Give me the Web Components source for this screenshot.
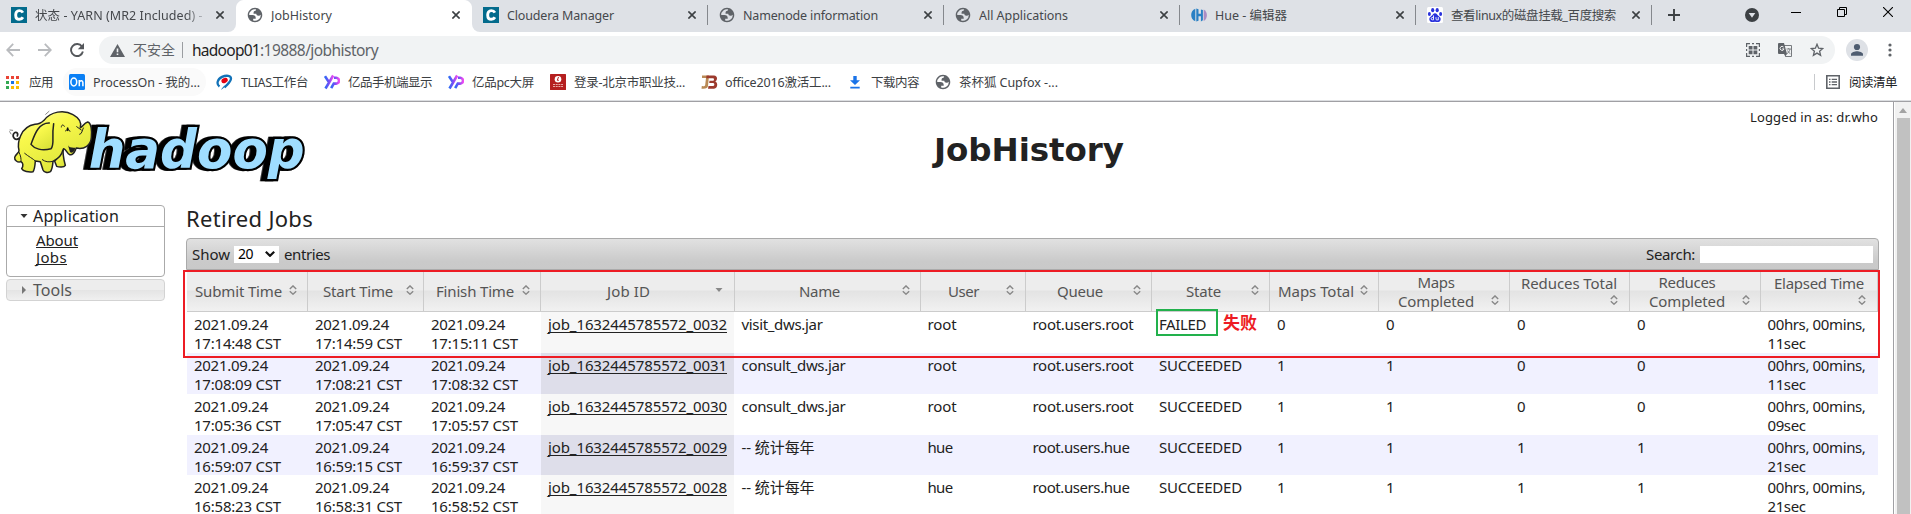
<!DOCTYPE html>
<html lang="zh-CN">
<head>
<meta charset="utf-8">
<title>JobHistory</title>
<style>
html,body{margin:0;height:100%;overflow:hidden;background:#fff}
body{font-family:"Noto Sans","Noto Sans CJK SC",sans-serif;color:#222}
</style>
</head>
<body>
<browser-window></browser-window>
<script>
const define = (name, html, setup) => {
  const tpl = document.createElement('template');
  tpl.innerHTML = html;
  customElements.define(name, class extends HTMLElement {
    connectedCallback() {
      if (this.shadowRoot) return;
      this.attachShadow({ mode: 'open' }).append(tpl.content.cloneNode(true));
      if (setup) setup.call(this, this.shadowRoot);
    }
  });
};

/* A label tracked to fill a given width in pixels. */
define('fit-text', `<style>:host{display:inline-block;white-space:pre;flex:none}</style><span><slot></slot></span>`, function (root) {
  const w = +this.getAttribute('w');
  const span = root.querySelector('span');
  const natural = span.getBoundingClientRect().width;
  this.style.width = w + 'px';
  span.style.letterSpacing = ((w - natural) / [...this.textContent].length).toFixed(3) + 'px';
});

const globe = '<svg viewBox="1 1 22 22" width="16" height="16"><path fill="#5f6368" fill-rule="evenodd" d="M12 2C6.48 2 2 6.48 2 12s4.48 10 10 10 10-4.48 10-10S17.52 2 12 2zM4 12h4.4c3.407.022 4.922 1.73 4.543 5.127H9.488v2.47a8.004 8.004 0 0 0 10.498-8.083C19.327 12.504 18.332 13 17 13c-2.137 0-3.206-.916-3.206-2.75h-3.748c-.274-2.728.683-4.092 2.87-4.092 0-.975.327-1.597.811-1.97A8.004 8.004 0 0 0 4 12z"/></svg>';
const yp = '<svg viewBox="0 0 16 16" width="16" height="16"><defs><linearGradient id="g"><stop stop-color="#2c6bf5"/><stop offset=".5" stop-color="#7a4cf5"/><stop offset="1" stop-color="#f04bf0"/></linearGradient></defs><g fill="none" stroke="url(#g)" stroke-width="2.6"><path d="M1 2.2 4.5 7.5M9.2 1.5 5.4 8 1.5 14.5"/><path d="M7.2 14.2 9.8 9.6H12a2.9 2.9 0 0 0 .3-5.8H10"/></g></svg>';
const icons = {
  globe, yp,
  cloudera: '<svg viewBox="0 0 16 16" width="16" height="16"><path fill="#036b8c" d="M0 0h16v16H0z"/><path fill="none" stroke="#fff" stroke-width="2.9" d="M11.9 5.6C11.1 4.2 9.900 3.600 8.300 3.600 5.900 3.600 4.700 5.400 4.700 7.900s1.200 4.400 3.600 4.400c1.600 0 2.800-.7 3.600-2.100"/></svg>',
  hue: '<svg viewBox="0 0 16 16" width="16" height="16"><path fill="#2a80c4" d="M4.300 1.800v12.400C1.500 13.300.2 10.700.2 8S1.500 2.700 4.300 1.800zM5.300 1.600l2.200.6v4.600h2.400V2.400l2 .6v10.300l-2 1.200V9.200H7.500v4.600l-2.200.7z"/><path fill="#ab8cc4" d="M12.700 2.500C14.900 3.500 15.900 6 15.900 8s-.9 5-3.200 6z"/></svg>',
  baidu: '<svg viewBox="0 0 16 16" width="16" height="16"><rect width="16" height="16" rx="1.500" fill="#fff"/><g fill="#2a32dc"><ellipse cx="2.400" cy="7" rx="1.500" ry="2"/><ellipse cx="5.700" cy="3.200" rx="1.600" ry="2.100"/><ellipse cx="10.200" cy="3.200" rx="1.600" ry="2.100"/><ellipse cx="13.600" cy="7" rx="1.500" ry="2"/><path d="M8 6.200c1.800 0 2.300 1.700 3.600 2.900 1.700 1.300 2.500 2.300 1.900 4.100-.7 2.100-2.900 2-5.500 1.500-2.600.5-4.800.6-5.500-1.500-.6-1.800.2-2.800 1.900-4.100C5.700 7.900 6.200 6.200 8 6.200z"/></g><path d="M6.500 8.500v4.300H5.300c-1.500 0-1.500-2.300 0-2.300h1.200M9 10.200v1.700c0 1 .4 1 2.300 1v-2.800" fill="none" stroke="#fff" stroke-width=".9"/></svg>',
  apps: '<svg viewBox="0 0 13 13" width="13" height="13"><path fill="#ea4335" d="M0 0h3v3H0zm5 0h3v3H5zm5 0h3v3h-3z"/><path fill="#34a853" d="M0 5h3v3H0zM0 10h3v3H0z"/><path fill="#1a73e8" d="M5 5h3v3H5z"/><path fill="#fbbc04" d="M10 5h3v3h-3zM5 10h3v3H5zm5 0h3v3h-3z"/></svg>',
  on: '<svg viewBox="0 0 16 16" width="16" height="16"><rect width="16" height="16" rx="1.500" fill="#0b80f5"/><g fill="none" stroke="#fff" stroke-width="1.500"><ellipse cx="4.800" cy="8" rx="2.900" ry="3.900"/><path d="M10.300 12.200V6M10.300 8c.9-1.700 3.600-1.800 3.600.6v3.600"/></g></svg>',
  tlias: '<svg viewBox="0 0 17 16" width="17" height="16"><path fill="none" stroke="#1272b8" stroke-width="2.300" d="M3.500 12.500C0 10 1.500 5 6 2.900c4.500-2 9-1.400 9 1.700 0 3.400-3.500 5.300-6.500 8.900"/><path fill="#1272b8" d="M5 16c1-2.600 3-4.500 6-5.500L7.500 14z"/><ellipse cx="8.600" cy="6.500" rx="3.300" ry="2.400" fill="#e60012" transform="rotate(-25 8.600 6.500)"/></svg>',
  red: '<svg viewBox="0 0 16 16" width="16" height="16"><rect width="16" height="16" rx=".5" fill="#b51f1f"/><circle cx="8" cy="5.200" r="3.300" fill="#fff"/><path d="M8.500 3 7.300 6.300h1.500" stroke="#b51f1f" fill="none"/><path d="M3 10.500h10M3 12.500h10" stroke="#e8a9a4" stroke-width="1.200" stroke-dasharray="2 .7"/></svg>',
  b: '<svg viewBox="0 0 17 16" width="17" height="16"><path fill="#b98a55" d="M1 1.500h7L7 12c-.4 2.300-2 3-6.500 2.700l.3-2.600c2.500.1 3.200 0 3.400-1.200L5 4H1z"/><path fill="#9c3a2d" d="M5.500 1.500H13c3.500 0 4 4.500 1.200 6C17.500 8.800 16.500 14.700 13 14.700H7l.5-2.600h4.700c1.500 0 1.500-3 0-3H8.200l.3-2.400H12c1.300 0 1.300-2.500 0-2.500H5.200z"/></svg>',
  download: '<svg viewBox="0 0 10 13" width="10" height="13"><path fill="#1a73e8" d="M3.300 0h3.400v4.200H10L5 9 0 4.200h3.300zM.3 10.800h9.400v1.700H.3z"/></svg>',
  reading: '<svg viewBox="0 0 14 14" width="14" height="14"><path fill="none" stroke="#5f6368" stroke-width="1.600" d="M.8.8h12.400v12.400H.8z"/><path stroke="#5f6368" stroke-width="1.300" d="M3 4.300h1.500M3 7h1.500M3 9.700h1.500M5.700 4.300H11M5.700 7H11M5.700 9.700H11"/></svg>',
  back: '<svg viewBox="0 0 14 14" width="14" height="14"><path fill="none" stroke="#b9bbbe" stroke-width="1.800" d="M14 7H1.500M7.200.9 1.200 7l6 6.100"/></svg>',
  forward: '<svg viewBox="0 0 14 14" width="14" height="14"><path fill="none" stroke="#b9bbbe" stroke-width="1.800" d="M0 7h12.500M6.800.9l6 6.100-6 6.100"/></svg>',
  reload: '<svg viewBox="0 0 14 14" width="14" height="14"><path fill="none" stroke="#54575b" stroke-width="1.900" d="M12 3.600A6 6 0 1 0 12.900 8.500"/><path fill="#54575b" d="M14 0v6.300H7.800z"/></svg>',
  warning: '<svg viewBox="0 0 15 13" width="15" height="13"><path fill="#5f6368" fill-rule="evenodd" d="M7.500 0 15 13H0zM6.700 4.500v3.700h1.600V4.500zm0 5v1.600h1.600V9.500z"/></svg>',
  qr: '<svg viewBox="0 0 14 14" width="14" height="14"><path fill="none" stroke="#5f6368" stroke-width="1.200" d="M.6 4V.6H4M10 .6h3.400V4M13.400 10v3.400H10M4 13.400H.6V10M6 .6h2M6 13.400h2M.6 6v2M13.400 6v2"/><path fill="#5f6368" d="M2.700 2.900h3.800v3.700H2.700zm4.800 0h3.800v3.700H7.500zM2.700 7.600h3.800v3.700H2.700zm4.800 0h3.800v3.700H7.500z"/></svg>',
  translate: '<svg viewBox="0 0 14 14" width="14" height="14"><path fill="none" stroke="#777a7e" d="M6 2.500h7.500v11H7.200"/><path fill="#5f6368" d="M1 0h5l3 11H1a1 1 0 0 1-1-1V1a1 1 0 0 1 1-1zM6 11h3l-1.700 2.600z"/><path fill="none" stroke="#fff" stroke-width=".9" d="M5.600 4.100a2 2 0 1 0 .4 1.800H4.200"/><path fill="none" stroke="#777a7e" stroke-width=".9" d="M8.500 6H13M10.700 5v1M12 6c-.5 2.500-1.500 3.600-3 4.700M9.600 7.500c.5 1.500 1.500 2.500 2.800 3.200"/></svg>',
  star: '<svg viewBox="0 0 14 14" width="14" height="14"><path fill="none" stroke="#5f6368" stroke-width="1.300" d="m7 1.300 1.600 3.900 4.200.3-3.200 2.700 1 4.100L7 10.100l-3.600 2.200 1-4.100L1.200 5.500l4.200-.3z"/></svg>',
  avatar: '<svg viewBox="0 0 22 22" width="22" height="22"><circle cx="11" cy="11" r="11" fill="#dee1e6"/><circle cx="11" cy="8" r="3.100" fill="#4e5c70"/><path fill="#4e5c70" d="M5 16.800v-1.600c0-2 4-3 6-3s6 1 6 3v1.600z"/></svg>',
  dots: '<svg viewBox="0 0 4 14" width="4" height="14"><g fill="#5f6368"><circle cx="2" cy="2" r="1.600"/><circle cx="2" cy="7" r="1.600"/><circle cx="2" cy="12" r="1.600"/></g></svg>',
  x: '<svg viewBox="0 0 8 8" width="8" height="8"><path stroke="#3c4043" stroke-width="1.600" d="m.4.4 7.200 7.200m0-7.200L.4 7.600"/></svg>',
  plus: '<svg viewBox="0 0 12 12" width="12" height="12"><path stroke="#3c4043" stroke-width="1.900" d="M6 0v12M0 6h12"/></svg>',
  down: '<svg viewBox="0 0 14 14" width="14" height="14"><circle cx="7" cy="7" r="7" fill="#3c4043"/><path fill="#dee1e6" d="M3.700 5h6.600L7 9.800z"/></svg>',
  min: '<svg viewBox="0 0 10 10" width="10" height="10"><path stroke="#000" d="M0 5.500h10"/></svg>',
  restore: '<svg viewBox="0 0 10 10" width="10" height="10"><path fill="none" stroke="#000" d="M.5 2.500h7v7h-7zM2.500 2.500v-2h7v7h-2"/></svg>',
  close: '<svg viewBox="0 0 10 10" width="10" height="10"><path stroke="#000" stroke-width="1.100" d="m0 0 10 10M10 0 0 10"/></svg>',
  sort: '<svg viewBox="0 0 8 10" width="8" height="10"><path fill="none" stroke="#888" stroke-width="1.400" d="M.8 4 4 .9 7.200 4M.8 6.200 4 9.200l3.200-3"/></svg>',
  sorted: '<svg viewBox="0 0 8 10" width="8" height="10"><path fill="#888" d="M.5 3h7L4 7z"/></svg>'
};
define('ui-icon', '<style>:host{display:block;flex:none}svg{display:block}</style>', function (root) {
  root.append(document.createRange().createContextualFragment(icons[this.getAttribute('name')] || ''));
});

define('browser-tab', `<style>
:host{display:flex;align-items:center;box-sizing:border-box;width:236px;height:32px;padding:0 12px 2px 11px;background:#dee1e6;color:#45484c;font-size:12.5px;line-height:18px;flex:none;position:relative}
.t{flex:1;margin-left:8px;padding-top:1px;overflow:hidden;height:18px}
:host([sep])::after{content:"";position:absolute;right:0;top:5px;width:1px;height:20px;background:#85888d}
:host([active]){background:linear-gradient(#fff,#fff) 0 8px no-repeat,radial-gradient(circle at 8px 8px,#fff 7.5px,#dee1e6 8.5px) 0 0/8px 8px no-repeat,radial-gradient(circle at 0 8px,#fff 7.5px,#dee1e6 8.5px) 100% 0/8px 8px no-repeat,#fff}
:host([first]){border-bottom-right-radius:8px}
:host([after]){border-bottom-left-radius:8px}
:host([first]) .t{-webkit-mask:linear-gradient(90deg,#000 150px,transparent 174px)}
</style><ui-icon></ui-icon><div class="t"><slot></slot></div><ui-icon name="x"></ui-icon>`, function (root) {
  const icon = document.createElement('ui-icon');
  icon.setAttribute('name', this.getAttribute('icon'));
  root.querySelector('ui-icon').replaceWith(icon);
});

define('tab-strip', `<style>
:host{display:flex;height:32px;background:#fff}
.end{flex:1;display:flex;background:#dee1e6;box-sizing:border-box}
.end ui-icon{margin-top:7px}
</style>
<browser-tab first icon="cloudera"><fit-text w="171">状态 - YARN (MR2 Included) - </fit-text></browser-tab>
<browser-tab active icon="globe"><fit-text w="61">JobHistory</fit-text></browser-tab>
<browser-tab after sep icon="cloudera"><fit-text w="107">Cloudera Manager</fit-text></browser-tab>
<browser-tab sep icon="globe"><fit-text w="135">Namenode information</fit-text></browser-tab>
<browser-tab sep icon="globe"><fit-text w="89">All Applications</fit-text></browser-tab>
<browser-tab sep icon="hue"><fit-text w="72">Hue - 编辑器</fit-text></browser-tab>
<browser-tab sep icon="baidu"><fit-text w="165">查看linux的磁盘挂载_百度搜索</fit-text></browser-tab>
<div class="end"><ui-icon name="plus" style="margin:9px 0 0 16px"></ui-icon><ui-icon name="down" style="margin:8px 0 0 65px"></ui-icon><ui-icon name="min" style="margin-left:32px"></ui-icon><ui-icon name="restore" style="margin-left:36px"></ui-icon><ui-icon name="close" style="margin-left:36px"></ui-icon></div>`);

define('address-bar', `<style>
:host{display:flex;align-items:center;height:36px;box-sizing:border-box;padding-left:6px;font-size:15.5px;line-height:24px}
.box{display:flex;align-items:center;width:1736px;height:28px;border-radius:14px;background:#f1f3f4;margin-left:15px;box-sizing:border-box;padding-left:11px;color:#5f6368}
.bar{width:1px;height:16px;background:#9a9da1;margin:0 9px 0 7px}
.host{color:#222}
</style>
<ui-icon name="back"></ui-icon><ui-icon name="forward" style="margin-left:18px"></ui-icon><ui-icon name="reload" style="margin-left:18px"></ui-icon>
<div class="box"><ui-icon name="warning"></ui-icon><fit-text w="42" style="font-size:14px;margin-left:8px">不安全</fit-text><span class="bar"></span><fit-text class="host" w="68">hadoop01</fit-text><fit-text w="118">:19888/jobhistory</fit-text>
<ui-icon name="qr" style="margin-left:auto"></ui-icon><ui-icon name="translate" style="margin-left:18px"></ui-icon><ui-icon name="star" style="margin:0 11px 0 18px"></ui-icon></div>
<ui-icon name="avatar" style="margin-left:11px"></ui-icon><ui-icon name="dots" style="margin-left:20px"></ui-icon>`);

define('book-mark', `<style>:host{display:flex;align-items:center;flex:none}div{padding-top:2px}</style><ui-icon></ui-icon><div><slot></slot></div>`, function (root) {
  const icon = document.createElement('ui-icon');
  icon.setAttribute('name', this.getAttribute('icon'));
  icon.style.marginRight = (this.getAttribute('gap') || 8) + 'px';
  root.querySelector('ui-icon').replaceWith(icon);
});
define('bookmarks-bar', `<style>
:host{display:flex;align-items:center;height:32px;box-sizing:border-box;padding:0 14px 4px 6px;font-size:12.5px;line-height:18px;color:#3c4043}
.pill{height:28px;background:#fafafa;border-radius:14px;padding:0 6px;margin:0 10px;box-sizing:border-box}
i{width:1px;height:16px;background:#c8cacd;margin:0 11px 0 auto}
</style>
<book-mark icon="apps" gap="10"><fit-text w="24">应用</fit-text></book-mark>
<book-mark class="pill" icon="on"><fit-text w="107">ProcessOn - 我的...</fit-text></book-mark>
<book-mark icon="tlias"><fit-text w="67">TLIAS工作台</fit-text></book-mark>
<book-mark icon="yp" style="margin-left:16px"><fit-text w="84">亿品手机端显示</fit-text></book-mark>
<book-mark icon="yp" style="margin-left:16px"><fit-text w="62">亿品pc大屏</fit-text></book-mark>
<book-mark icon="red" style="margin-left:16px"><fit-text w="111">登录-北京市职业技...</fit-text></book-mark>
<book-mark icon="b" style="margin-left:16px" gap="7"><fit-text w="106">office2016激活工...</fit-text></book-mark>
<book-mark icon="download" style="margin-left:19px" gap="11"><fit-text w="48">下载内容</fit-text></book-mark>
<book-mark icon="globe" style="margin-left:16px"><fit-text w="99">茶杯狐 Cupfox -...</fit-text></book-mark>
<i></i><book-mark icon="reading" gap="9" style="color:#202124"><fit-text w="48">阅读清单</fit-text></book-mark>`);

define('hadoop-logo', `<style>:host{display:block;width:299px;height:74px}svg{display:block;overflow:visible}
text{font:italic bold 162px "DejaVu Sans",sans-serif;fill:#9fddff;stroke:#000;stroke-width:13px;paint-order:stroke;filter:drop-shadow(-14px 0 0 #000) drop-shadow(0 0 2px #999)}
</style><svg width="299" height="74" viewBox="24 39 897 222">
<defs><linearGradient id="y" x2=".6" y2="1"><stop stop-color="#ffffa5"/><stop offset=".4" stop-color="#f8f84b"/><stop offset="1" stop-color="#dce43a"/></linearGradient></defs>
<text x="266" y="218" textLength="648" lengthAdjust="spacingAndGlyphs">hadoop</text>
<g transform="translate(2 1)" fill="url(#y)" stroke="#222" stroke-width="4.500" stroke-linejoin="round" stroke-linecap="round">
<path d="M57 128C43 139 34 124 39 115C44 107 54 112 50 122" fill="none" stroke-width="5"/>
<path d="M188 160C185 178 190 195 194 210C190 217 175 216 168 213L162 198Z"/>
<path d="M130 75C150 48 190 42 217 58C235 68 243 83 239 97C247 95 249 83 261 80C272 82 274 108 272 126C271 150 251 163 227 158C222 167 220 181 207 178C199 174 198 164 189 160L186 166C183 181 171 191 157 198C156 211 155 222 149 229C140 234 130 231 127 224L119 199L104 197C103 211 101 224 97 229C85 231 67 228 63 220C69 211 67 201 61 199C50 203 41 194 42 186C44 177 56 173 55 165C49 143 59 94 103 87C117 87 123 82 130 75Z"/>
<path d="M146 83C111 82 100 124 91 147C101 160 123 168 151 160C163 146 152 130 159 85" />
<path d="M104 197C97 190 84 184 72 174M157 198C143 201 135 200 125 193M55 171C60 181 62 190 61 199M182 95C182 88 188 86 191 93M194 107C200 101 207 102 208 108M228 94L242 104M237 117C244 116 244 106 248 98" fill="none" stroke-width="3"/>
<path d="M202 150C205 157 216 158 225 157C221 166 218 175 208 171Z" fill="#222" stroke="none"/>
<ellipse cx="201" cy="102" rx="3" ry="6" fill="#111" stroke="none"/>
<path d="M135 57L145 48M27 109L31 116M28 104L36 105" fill="none" stroke="#888" stroke-width="3"/></g></svg>`);

define('side-nav', `<style>
:host{display:block;width:159px;color:#222}
.open{height:72px;box-sizing:border-box;border:1px solid #aaa;border-radius:4px;font-size:15px;line-height:17.500px}
.h{display:flex;align-items:center;height:20px;padding-left:13px;border-bottom:1px solid #aaa;font-size:16px;line-height:20px}
.h svg{margin-right:5px;flex:none}
.links{padding:5px 0 0 29px;display:flex;flex-direction:column}
.links fit-text{border-bottom:1px solid #222;line-height:16px;height:15px;margin-bottom:1px}
.tools{display:flex;align-items:center;height:22px;box-sizing:border-box;border:1px solid #d3d3d3;border-radius:4px;margin-top:2px;padding-left:13px;font-size:16px;color:#555;background:linear-gradient(#ededed 50%,#e4e4e4 50%,#f0f0f0)}
.tools svg{margin-right:5px}
</style>
<div class="open"><div class="h"><svg width="8" height="8" viewBox="0 0 8 8"><path d="M.5 2h7L4 6z" fill="#333"/></svg><fit-text w="86">Application</fit-text></div>
<div class="links"><fit-text w="42">About</fit-text><fit-text w="31">Jobs</fit-text></div></div>
<div class="tools"><svg width="8" height="8" viewBox="0 0 8 8"><path d="M2 0v8l4-4z" fill="#777"/></svg><fit-text w="39">Tools</fit-text></div>`);

define('table-tools', `<style>
:host{display:flex;align-items:center;height:32px;box-sizing:border-box;border:1px solid #aaa;border-radius:4px 4px 0 0;background:linear-gradient(#e1e1e1,#cacaca 75%,#c9c9c9);font-size:15px;line-height:20px;padding:0 5px;color:#222}
.sel{display:flex;align-items:center;justify-content:space-between;width:45px;height:17px;background:#fff;margin:0 5px 0 4px;box-sizing:border-box;padding:0 4px;font-size:14px;color:#000}
.in{width:173px;height:17px;background:#fff;margin-left:5px}
</style><fit-text w="38">Show</fit-text><span class="sel"><fit-text w="15">20</fit-text><svg width="10" height="6" viewBox="0 0 10 6"><path fill="none" stroke="#111" stroke-width="2.200" d="m.8.8 4.200 4 4.200-4"/></svg></span><fit-text w="46">entries</fit-text><fit-text w="49" style="margin-left:auto">Search:</fit-text><span class="in"></span>`);

/* Columns: width, label inset, arrow distance from the right, arrow drop, lines [text, width]. */
const columns = [
  [121, 8, 11, 0, [['Submit Time', 87]]], [116, 15, 10, 0, [['Start Time', 70]]], [117, 12, 11, 0, [['Finish Time', 78]]],
  [194, 66, 12, 0, [['Job ID', 43]]], [186, 64, 11, 0, [['Name', 41]]], [105, 27, 12, 0, [['User', 31]]],
  [126, 31, 11, 0, [['Queue', 46]]], [118, 34, 11, 0, [['State', 35]]], [109, 8, 11, 0, [['Maps Total', 76]]],
  [131, 19, 11, 9, [['Maps', 37], ['Completed', 76]]], [120, 11, 11, 10, [['Reduces Total', 96], ['', 1]]],
  [131, 19, 11, 9, [['Reduces', 57], ['Completed', 76]]], [117, 13, 11, 10, [['Elapsed Time', 90], ['', 1]]]
];
const grid = columns.map(c => c[0] + 'px').join(' ');
define('table-head', `<style>
:host{display:grid;grid-template-columns:${grid};height:42px;width:1691px;box-sizing:border-box;font-size:15px;line-height:19px;color:#555}
.c{display:flex;align-items:center;border-right:1px solid #ccc;border-bottom:1px solid #ccc;background:linear-gradient(#ededed 49%,#e3e3e3 51%,#f1f1f1);box-sizing:border-box;min-width:0}
.l{display:flex;flex-direction:column;align-items:center;padding-top:2px}.l fit-text{height:19px}
ui-icon{margin-left:auto}
</style>`, function (root) {
  root.append(document.createRange().createContextualFragment(columns.map(([, inset, right, drop, lines], i) =>
    `<div class="c" style="padding-left:${inset}px"><div class="l">${lines.map(([t, w]) => t ? `<fit-text w="${w}">${t}</fit-text>` : '<span style="height:17px"></span>').join('')}</div><ui-icon name="${i === 3 ? 'sorted' : 'sort'}" style="margin-right:${right === 10 ? 9 : right - 1}px;margin-top:${drop ? 19 : -1}px${drop && lines[1][0] === '' ? ';margin-left:' + (i === 12 ? -6 : -7) + 'px' : ''}"></ui-icon></div>`).join('')));
});

define('job-row', `<style>
:host{display:grid;grid-template-columns:${grid};height:41px;width:1691px;font-size:15px;line-height:19px;color:#222}
div{padding:3px 0 0 7px;display:flex;flex-direction:column;align-items:flex-start;box-sizing:border-box}
div:nth-of-type(n+9){padding-left:7px}
div:nth-of-type(4){background:#f7f7f7;margin-right:1px}
:host([odd]){background:#f1f1ff}
:host([odd]) div:nth-of-type(4){background:#dedeea}
.a{border-bottom:1px solid #222;height:17px;line-height:19px}
fit-text{height:19px}
</style>`, function (root) {
  const [d1, d2, d3, id, name, user, state, m1, m2, r1, r2, sec] = this.getAttribute('data').split('|');
  const t = (s, w) => `<fit-text w="${w}">${s}</fit-text>`;
  const date = d => t('2021.09.24', 74) + t(d + ' CST', 87);
  const nameW = { 'visit_dws.jar': 81, 'consult_dws.jar': 104 }[name] || 73;
  root.append(document.createRange().createContextualFragment([
    date(d1), date(d2), date(d3), `<fit-text class="a" w="179">job_1632445785572_${id}</fit-text>`, t(name, nameW),
    t(user, user === 'hue' ? 25 : 29), t('root.users.' + user, user === 'hue' ? 97 : 101), t(state, state === 'FAILED' ? 47 : 83),
    t(m1, 8.5), t(m2, 8.5), t(r1, 8.5), t(r2, 8.5), t('00hrs, 00mins,', 98) + t(sec + 'sec', 38)
  ].map((c, i) => `<div${[4, 5, 6, 12].includes(i) ? ' style="padding-left:6.5px"' : ''}>${c}</div>`).join('')));
});

define('history-page', `<style>
:host{display:flex;flex:1;min-height:0;border-top:1px solid #a0a0a4;position:relative}
main{flex:1;border-right:1px solid #a0a0a4;overflow:hidden}
header{display:flex;height:103px;padding:6px 15px 0 8px;box-sizing:border-box}
h1{margin:22px 0 0 627px;font:bold 32.500px/40px "DejaVu Sans",sans-serif;color:#222;width:190px}
.user{font-size:13px;line-height:18px;margin-left:auto}
.cols{display:flex;padding-left:6px}
section{margin-left:21px;width:1693px}
h2{margin:0;font-weight:400;font-size:22px;line-height:27px;height:33px}
.body{padding-left:1px;width:1692px}
.scroll{width:16px;margin-left:1px;background:#f1f1f1;display:flex;flex-direction:column;align-items:center}
.scroll svg{margin:6px 0 5px;display:block}
.thumb{width:13px;flex:1;background:#c1c1c1}
.mark{position:absolute;box-sizing:border-box}
.red{left:183px;top:168px;width:1697px;height:88px;border:2px solid #ed1c24}
.green{left:1156px;top:207px;width:62px;height:27px;border:2px solid #22b14c}
.note{left:1223px;top:209px;color:#ed1c24;font-weight:700;font-size:17px;line-height:24px}
</style>
<main>
<header><hadoop-logo></hadoop-logo><h1><fit-text w="190">JobHistory</fit-text></h1><div class="user"><fit-text w="128">Logged in as: dr.who</fit-text></div></header>
<div class="cols"><side-nav></side-nav><section>
<h2><fit-text w="127">Retired Jobs</fit-text></h2>
<table-tools></table-tools>
<div class="body"><table-head></table-head>
<job-row data="17:14:48|17:14:59|17:15:11|0032|visit_dws.jar|root|FAILED|0|0|0|0|11"></job-row>
<job-row odd data="17:08:09|17:08:21|17:08:32|0031|consult_dws.jar|root|SUCCEEDED|1|1|0|0|11"></job-row>
<job-row data="17:05:36|17:05:47|17:05:57|0030|consult_dws.jar|root|SUCCEEDED|1|1|0|0|09"></job-row>
<job-row odd style="height:40px" data="16:59:07|16:59:15|16:59:37|0029|-- 统计每年|hue|SUCCEEDED|1|1|1|1|21"></job-row>
<job-row data="16:58:23|16:58:31|16:58:52|0028|-- 统计每年|hue|SUCCEEDED|1|1|1|1|21"></job-row>
</div></section></div>
</main>
<div class="scroll"><svg width="8" height="5" viewBox="0 0 8 5"><path d="M0 5h8L4 0z" fill="#a3a3a3"/></svg><div class="thumb"></div></div>
<div class="mark red"></div><div class="mark green"></div><fit-text class="mark note" w="34">失败</fit-text>`);

define('browser-window', `<style>:host{display:flex;flex-direction:column;width:1911px;height:514px;overflow:hidden;background:#fff}i{height:1px;background:#dcdee1;flex:none}</style>
<tab-strip></tab-strip><address-bar></address-bar><bookmarks-bar></bookmarks-bar><i></i><history-page></history-page>`);
</script>
</body>
</html>
